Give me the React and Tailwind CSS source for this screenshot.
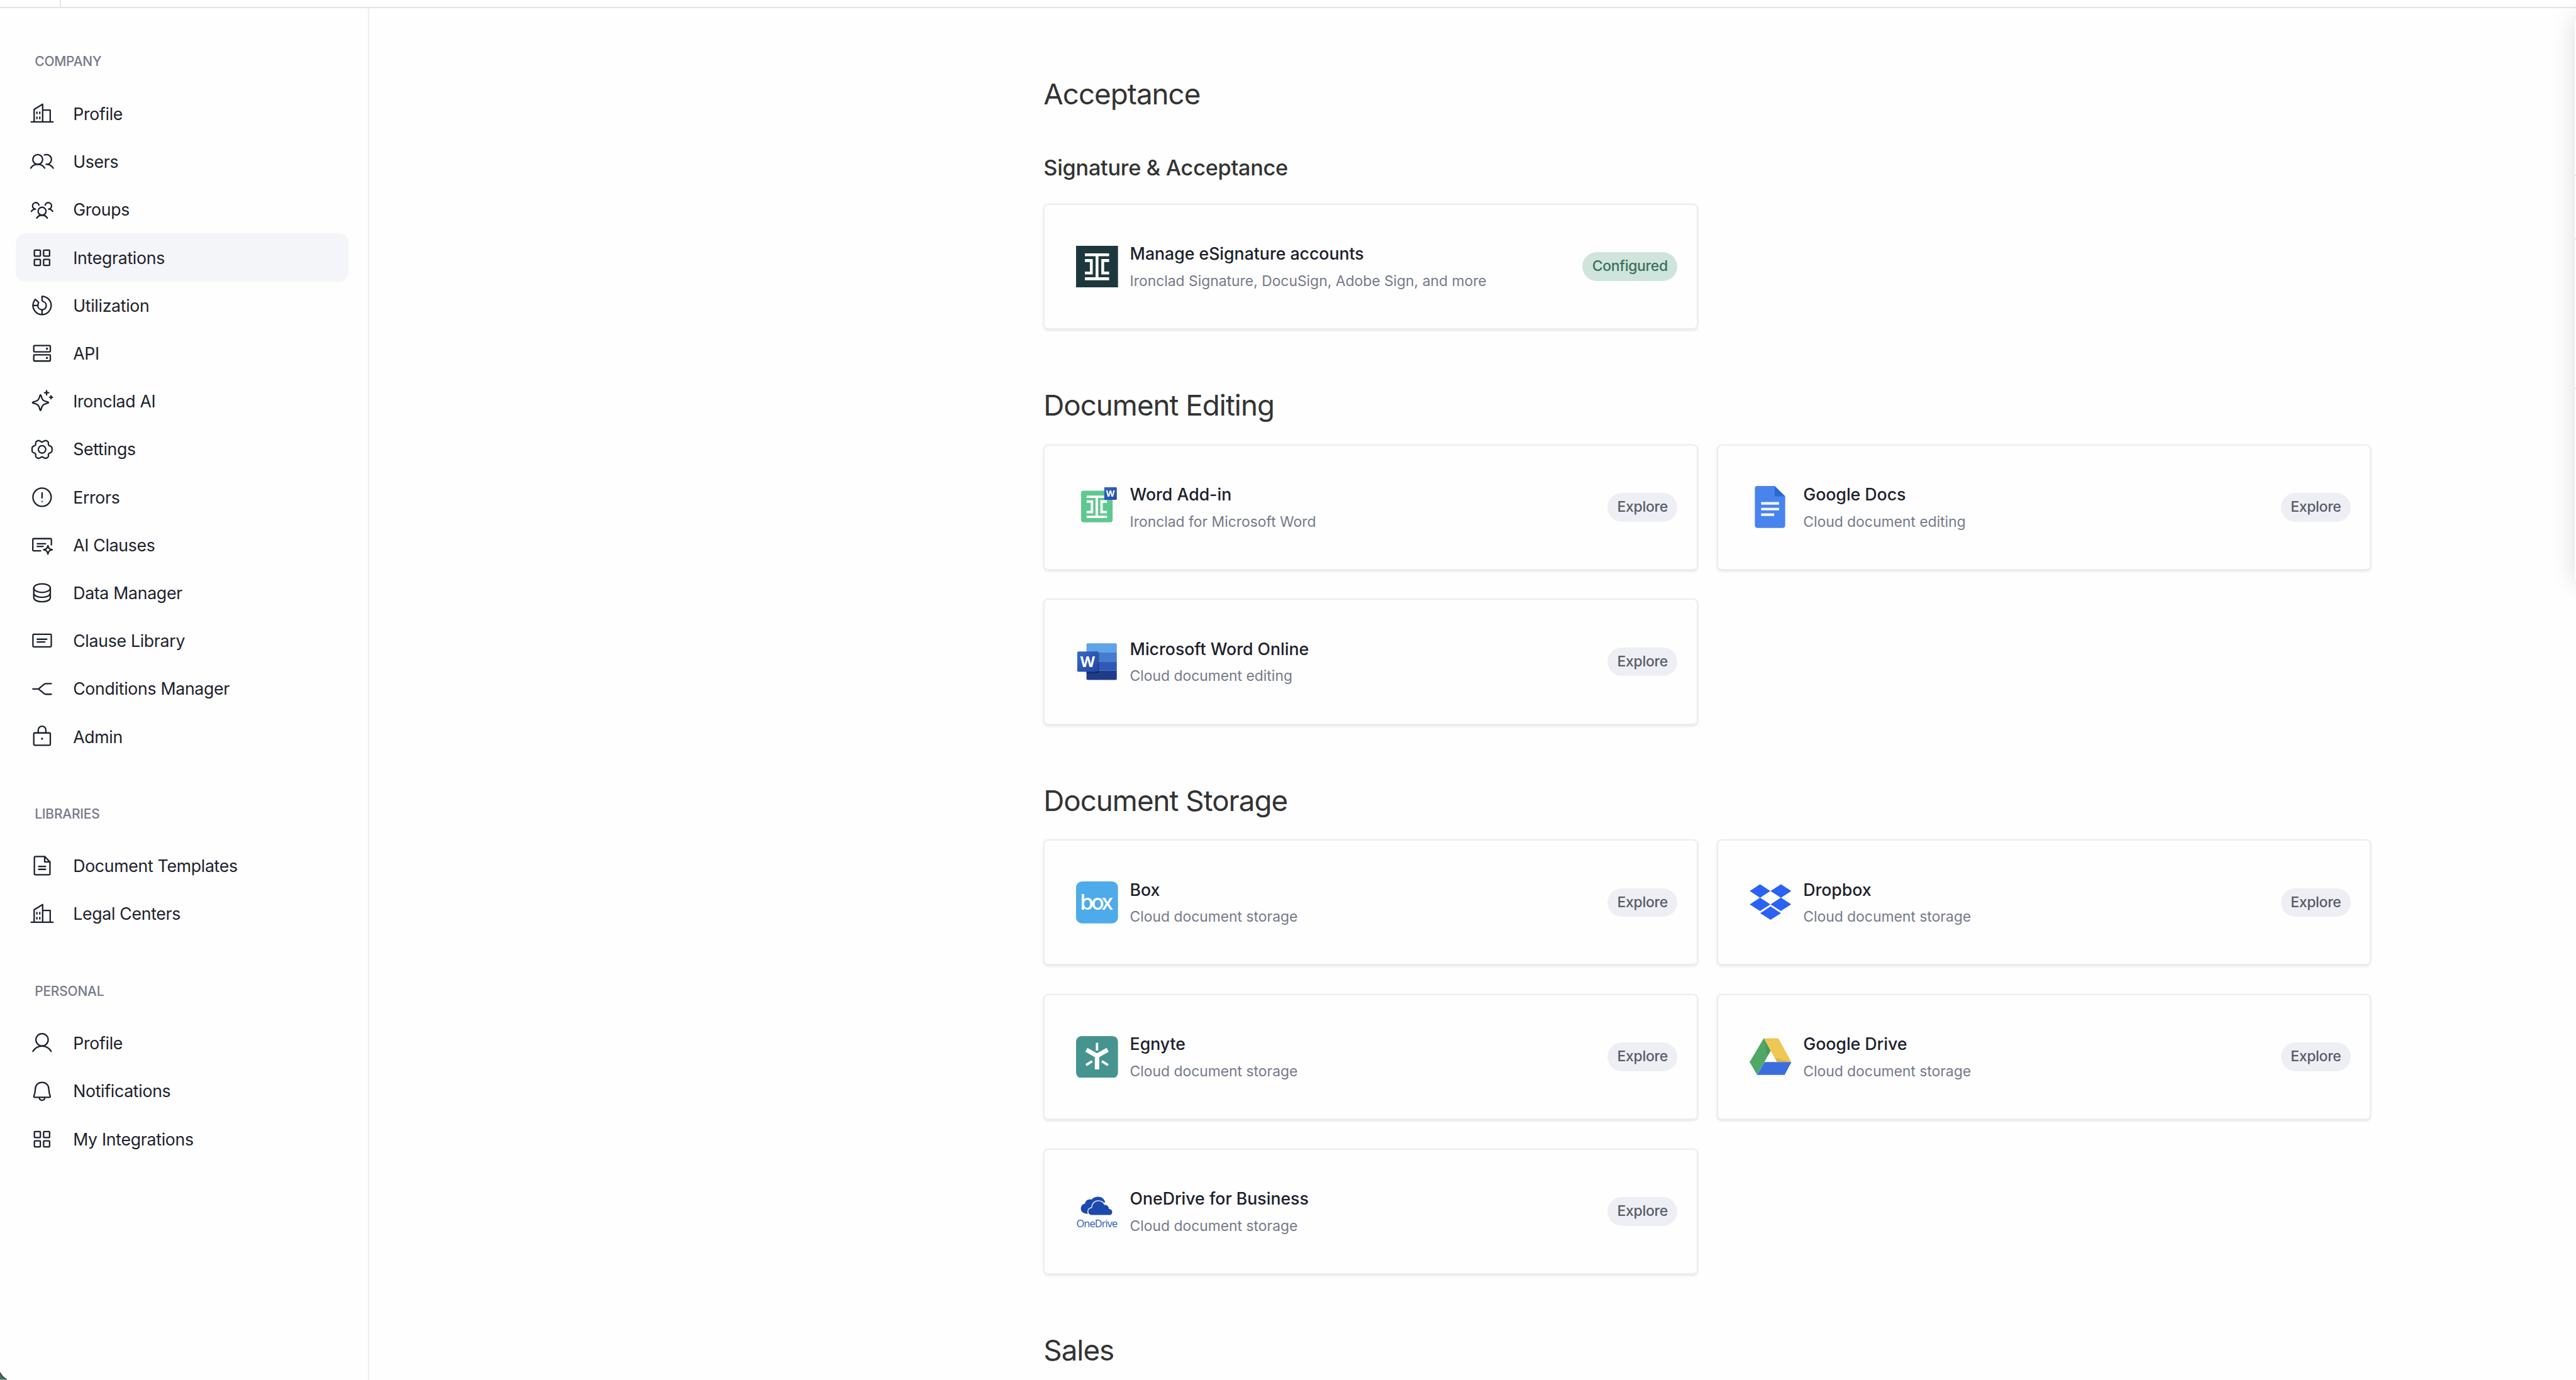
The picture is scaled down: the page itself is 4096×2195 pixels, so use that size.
const icons = {
  building: (
    <>
      <path d="M2.9 18.8h18.3M5.4 18.8V8.4l7.1-4.3v14.7M12.5 9h6.3v9.8" />
      <path d="M7.7 10.7v1.2M10.1 10.7v1.2M7.7 14.9v1.2M10.1 14.9v1.2" />
    </>
  ),
  users: (
    <>
      <circle cx="8.4" cy="10.3" r="4.1" />
      <path d="M2.6 17.5c1.3-2 3.4-3.1 5.8-3.1s4.5 1.1 5.8 3.1" />
      <path d="M14 6.6a4.1 4.1 0 1 1 1.4 7.8c2.4 0 4.6 1.1 5.9 3.1" />
    </>
  ),
  groups: (
    <>
      <circle cx="12" cy="13.1" r="3.3" />
      <path d="M7.6 18.8c.9-1.5 2.6-2.4 4.4-2.4s3.5.9 4.4 2.4" />
      <path d="M9.4 8a2.7 2.7 0 1 0-2.9 3.3c-1.5 0-2.6.7-3.4 1.9M14.6 8a2.7 2.7 0 1 1 2.9 3.3c1.5 0 2.6.7 3.4 1.9" />
    </>
  ),
  grid: (
    <>
      <rect x="5.6" y="5.7" width="5" height="5" rx=".6" />
      <rect x="13.3" y="5.7" width="5" height="5" rx=".6" />
      <rect x="5.6" y="13.4" width="5" height="5" rx=".6" />
      <rect x="13.3" y="13.4" width="5" height="5" rx=".6" />
    </>
  ),
  usage: (
    <>
      <path d="M12 4.4a7.6 7.6 0 1 1-7.6 7.6c0-1.7.6-3.3 1.5-4.6.3-.4.7-.4 1-.1l2 1.9c.3.3.3.6.1.9-.3.5-.5 1.2-.5 1.9a3.5 3.5 0 1 0 4.7-3.2c-.8-.3-1.2-.5-1.2-1.2z" />
      <path d="M4.4 12h4.1M12 15.5v4.1" />
    </>
  ),
  server: (
    <>
      <rect x="5.1" y="5.6" width="13.8" height="5.2" rx=".6" />
      <rect x="5.1" y="13.3" width="13.8" height="5.2" rx=".6" />
      <path d="M16.1 8.1v.2M16.1 15.8v.2" strokeWidth="1.7" />
    </>
  ),
  sparkle: (
    <>
      <path d="M10.7 6.9c.3 0 .4.3.5.7.9 3.5 1.6 4.3 5.2 5.1.6.2 1 .3 1 .6s-.4.5-1 .6c-3.6.9-4.3 1.6-5.2 5.2-.1.5-.2.8-.5.8s-.4-.3-.5-.8c-.9-3.6-1.6-4.3-5.2-5.2-.6-.1-1-.3-1-.6s.4-.4 1-.6c3.6-.8 4.3-1.6 5.2-5.1.1-.4.2-.7.5-.7z" />
      <path d="M15.8 3.4v3.5M14.1 5.1h3.5M19.5 7.7v2.4M18.3 8.9h2.4" />
    </>
  ),
  gear: (
    <>
      <path d="M12 5.9L14 4.8Q14.9 4.3 15.8 4.8L16.6 5.2Q17.3 5.6 17.3 6.5V7.8Q17.3 8.5 17.9 8.8L19.4 9.4Q20.3 9.9 20.3 10.8V13.2Q20.3 14.1 19.4 14.6L17.9 15.2Q17.3 15.5 17.3 16.2V17.5Q17.3 18.4 16.6 18.8L15.8 19.2Q14.9 19.7 14 19.2L12 18.1 10 19.2Q9.100 19.7 8.2 19.2L7.4 18.8Q6.7 18.4 6.7 17.5V16.2Q6.7 15.5 6.1 15.2L4.6 14.6Q3.7 14.1 3.7 13.2V10.8Q3.7 9.9 4.6 9.4L6.1 8.8Q6.7 8.5 6.7 7.8V6.5Q6.7 5.6 7.4 5.2L8.2 4.8Q9.1 4.3 10 4.8z" />
      <circle cx="12" cy="12" r="3.1" />
    </>
  ),
  alert: (
    <>
      <circle cx="12" cy="12" r="7.6" />
      <path d="M12 8.3v4.3M12 15.5v.1" />
    </>
  ),
  aiClause: (
    <>
      <path d="M10.8 16.9H5a.7.7 0 0 1-.7-.7V7.4a.7.7 0 0 1 .7-.7h14.1a.7.7 0 0 1 .7.7v4.5M8 11h6.9M8 13.2h4.9" />
      <path d="M16.9 12.5c.6 2.4 1 2.9 3.6 3.5-2.6.6-3 1.1-3.6 3.6-.6-2.5-1-3-3.6-3.6 2.6-.6 3-1.1 3.6-3.5z" />
    </>
  ),
  database: (
    <>
      <ellipse cx="12" cy="8.1" rx="6.9" ry="3.6" />
      <path d="M5.1 8.1v8.1c0 1.9 3.1 3.3 6.9 3.3s6.9-1.4 6.9-3.3V8.1M5.1 12.3c0 2 3.1 3.5 6.9 3.5s6.9-1.5 6.9-3.5" />
    </>
  ),
  clause: (
    <>
      <rect x="4.4" y="6.8" width="15.3" height="10.5" rx=".7" />
      <path d="M8 10.9h7.9M8 13.2h6.3" />
    </>
  ),
  branch: <path d="M4.3 12H9l4.7-3.9c.5-.4 1-.6 1.6-.6h4.4M9 12l4.7 3.8c.5.4 1 .6 1.6.6h4.4" />,
  lock: (
    <>
      <rect x="5.1" y="8.8" width="13.8" height="10.3" rx=".7" />
      <path d="M8.8 8.8V6.4a3.2 3.2 0 0 1 6.4 0v2.4" />
      <path d="M12 13.6v.1" strokeWidth="1.7" />
    </>
  ),
  document: (
    <>
      <path d="M6.3 4.4h7.9l4.4 4.5v10a.7.7 0 0 1-.7.7H6.3a.7.7 0 0 1-.7-.7V5.1a.7.7 0 0 1 .7-.7z" />
      <path d="M14.2 4.6v4.3h4.3M9.2 12.7h5.7M9.2 15.1h5.7" />
    </>
  ),
  person: (
    <>
      <circle cx="12" cy="9.4" r="5.1" />
      <path d="M4.4 19c1.7-2.8 4.4-4.4 7.6-4.4s5.9 1.6 7.6 4.4" />
    </>
  ),
  bell: (
    <>
      <path d="M12 4.5c-3.3 0-5.5 2.3-5.6 5.4-.1 2.5-.4 4-1.2 6.1-.2.6.1 1 .7 1h12.2c.6 0 .9-.4.7-1-.8-2.1-1.1-3.6-1.2-6.1-.1-3.1-2.3-5.4-5.6-5.4z" />
      <path d="M9.7 17.2c.1 1.4 1 2.3 2.3 2.3s2.2-.9 2.3-2.3" />
    </>
  ),
};

function NavIcon({ name }) {
  return (
    <svg
      className="size-6 shrink-0"
      viewBox="0 0 24 24"
      fill="none"
      stroke="currentColor"
      strokeWidth="1.2"
      strokeLinecap="round"
      strokeLinejoin="round"
    >
      {icons[name]}
    </svg>
  );
}

function IroncladMark({ transform }) {
  return (
    <path
      transform={transform}
      fill="#fff"
      d="M-8.5-9.4h17v2h-7.5v14.8h7.5v2h-17v-2h7.5v-14.8h-7.5zM-8.5-5.4h5.5v10.8h-5.5v-2h3.5v-6.8h-3.5zM8.5-5.4h-5.5v10.8h5.5v-2h-3.5v-6.8h3.5z"
    />
  );
}

const logos = {
  ironclad: (
    <>
      <rect width="35" height="35" fill="#1d383d" />
      <IroncladMark transform="translate(17.5 17.5) scale(1.19)" />
    </>
  ),
  wordAddin: (
    <>
      <defs>
        <linearGradient id="addinBlue" x1="0" y1="0" x2="1" y2="1">
          <stop stopColor="#3668c2" />
          <stop offset="1" stopColor="#2347ab" />
        </linearGradient>
      </defs>
      <rect x="4.2" y="4" width="26.3" height="26.3" rx="2" fill="#5ec88f" />
      <IroncladMark transform="translate(17.3 17.4)" />
      <rect x="23.5" y="1" width="10.5" height="10.5" rx=".7" fill="url(#addinBlue)" />
      <text x="28.7" y="8.9" textAnchor="middle" fontSize="7.4" fontWeight="700" fontFamily="Open Sans, sans-serif" fill="#fff">W</text>
    </>
  ),
  googleDocs: (
    <>
      <path d="M6.4 0h14.5l8.8 8.7v24.3a2 2 0 0 1-2 2H6.4a2 2 0 0 1-2-2V2a2 2 0 0 1 2-2z" fill="#4983ee" />
      <path d="M20.9 0l8.8 8.7h-8.8z" fill="#2f67d0" />
      <path d="M9.6 13.4h15v2.2h-15zM9.6 18.2h15v2.2h-15zM9.6 22.9h10.9v2.2H9.6z" fill="#f3f7fe" />
    </>
  ),
  word: (
    <>
      <defs>
        <linearGradient id="wordBlue" x1="0" y1="0" x2="1" y2="1">
          <stop stopColor="#376ac4" />
          <stop offset="1" stopColor="#2145a8" />
        </linearGradient>
      </defs>
      <path d="M9.7 2.2H33a1 1 0 0 1 1 1V10H8.7V3.2a1 1 0 0 1 1-1z" fill="#5fa3e8" />
      <path d="M8.7 10H34v7.5H8.7z" fill="#447ccf" />
      <path d="M8.7 17.5H34V25H8.7z" fill="#2d59b7" />
      <path d="M8.7 25H34v6.8a1 1 0 0 1-1 1H9.7a1 1 0 0 1-1-1z" fill="#1f3c88" />
      <path d="M8.7 9h9.4a1 1 0 0 1 1 1v16.2a1 1 0 0 1-1 1H8.7z" fill="#000" opacity=".3" />
      <rect x="1" y="9" width="17.3" height="17" rx="1" fill="url(#wordBlue)" />
      <text x="9.6" y="22" textAnchor="middle" fontSize="12.6" fontWeight="700" fontFamily="Open Sans, sans-serif" fill="#fff">W</text>
    </>
  ),
  box: (
    <>
      <rect width="35" height="35" rx="5" fill="#4eabe9" />
      <text x="3.4" y="23.6" textLength="27.8" fontSize="18" fontWeight="500" fontFamily="Inter, sans-serif" fill="#fff">box</text>
    </>
  ),
  dropbox: (
    <path
      fill="#2a62f5"
      d="M8.7 2.4l8.6 5.6-8.6 5.6L.1 8zM26.1 2.4L34.8 8l-8.7 5.6L17.5 8zM8.7 13.5l8.6 5.6-8.6 5.6-8.6-5.6zM26.1 13.5l8.7 5.6-8.7 5.6-8.6-5.6zM17.5 20.9l8.7 5.6-8.7 5.5-8.7-5.5z"
    />
  ),
  egnyte: (
    <>
      <rect width="35" height="35" rx="4.5" fill="#459490" />
      <g stroke="#fff" fill="none">
        <path d="M8.6 11.4l8.9 5.1 8.9-5.1M17.5 16v11.8" strokeWidth="3.7" />
        <path d="M17.5 5.7v6.4M8.3 24.2l5.2-3.3M26.7 24.2l-5.2-3.3" strokeWidth="2" />
      </g>
    </>
  ),
  googleDrive: (
    <>
      <path d="M11.8 1.8H24l10.9 19.9H22.8z" fill="#efc755" />
      <path d="M21.3 18.1l13.6 3.6H22.8z" fill="#dab650" />
      <path d="M11.8 1.8l5.7 10.6L6.3 32.4 0 21.7z" fill="#4fa866" />
      <path d="M11.8 1.8l5.7 10.6-2.7 4.2z" fill="#479a5e" />
      <path d="M12.4 21.7h22.5l-5.7 10.7H6.3z" fill="#3b6ddf" />
    </>
  ),
  oneDrive: (
    <>
      <path d="M9.8 19.2C6.3 19.2 4 17.4 4 14.9c0-2.2 1.5-3.9 3.5-4.1.2-2.3 2-3.6 4-3.6.5 0 1 .1 1.4.2C14.2 5.8 16.1 5 18.3 5c3 0 5.2 1.7 6 4.5z" fill="#1d49ae" />
      <path
        d="M13.2 20.6c-2 0-3.4-1.4-3.4-3.2 0-1.9 1.4-3.3 3.2-3.3.1-3.2 2.3-5.8 5.6-5.8 2.3 0 4.3 1.2 5.2 3.2 2.1-.2 3.8 1.2 4 3.4 1.5.2 2.7 1.3 2.7 2.9 0 1.7-1.2 2.8-2.8 2.8z"
        fill="#1d49ae"
        stroke="#fff"
        strokeWidth=".7"
      />
      <text x=".2" y="30.2" textLength="34.6" fontSize="8.6" fontFamily="Open Sans, sans-serif" fill="#2f59b8">OneDrive</text>
    </>
  ),
};

const nav = [
  {
    title: 'Company',
    items: [
      { label: 'Profile', icon: 'building' },
      { label: 'Users', icon: 'users' },
      { label: 'Groups', icon: 'groups' },
      { label: 'Integrations', icon: 'grid', active: true },
      { label: 'Utilization', icon: 'usage' },
      { label: 'API', icon: 'server' },
      { label: 'Ironclad AI', icon: 'sparkle' },
      { label: 'Settings', icon: 'gear' },
      { label: 'Errors', icon: 'alert' },
      { label: 'AI Clauses', icon: 'aiClause' },
      { label: 'Data Manager', icon: 'database' },
      { label: 'Clause Library', icon: 'clause' },
      { label: 'Conditions Manager', icon: 'branch' },
      { label: 'Admin', icon: 'lock' },
    ],
  },
  {
    title: 'Libraries',
    items: [
      { label: 'Document Templates', icon: 'document' },
      { label: 'Legal Centers', icon: 'building' },
    ],
  },
  {
    title: 'Personal',
    items: [
      { label: 'Profile', icon: 'person' },
      { label: 'Notifications', icon: 'bell' },
      { label: 'My Integrations', icon: 'grid' },
    ],
  },
];

const sections = [
  {
    title: 'Acceptance',
    subtitle: 'Signature & Acceptance',
    items: [
      { name: 'Manage eSignature accounts', desc: 'Ironclad Signature, DocuSign, Adobe Sign, and more', logo: 'ironclad', configured: true },
    ],
  },
  {
    title: 'Document Editing',
    items: [
      { name: 'Word Add-in', desc: 'Ironclad for Microsoft Word', logo: 'wordAddin' },
      { name: 'Google Docs', desc: 'Cloud document editing', logo: 'googleDocs' },
      { name: 'Microsoft Word Online', desc: 'Cloud document editing', logo: 'word' },
    ],
  },
  {
    title: 'Document Storage',
    items: [
      { name: 'Box', desc: 'Cloud document storage', logo: 'box' },
      { name: 'Dropbox', desc: 'Cloud document storage', logo: 'dropbox' },
      { name: 'Egnyte', desc: 'Cloud document storage', logo: 'egnyte' },
      { name: 'Google Drive', desc: 'Cloud document storage', logo: 'googleDrive' },
      { name: 'OneDrive for Business', desc: 'Cloud document storage', logo: 'oneDrive' },
    ],
  },
  { title: 'Sales', items: [] },
];

function Sidebar() {
  return (
    <aside className="w-[308px] shrink-0 border-r-[1.1px] border-[#ecedf3] pl-[13px] pr-4">
      {nav.map(({ title, items }) => (
        <nav key={title} className="pt-8">
          <h2 className="mb-3 h-6 pl-4 text-[11px] leading-[25px] font-medium tracking-[-0.01em] text-[#757a8a] uppercase">
            {title}
          </h2>
          {items.map(({ label, icon, active }) => (
            <a
              key={label}
              className={`flex h-10 items-center gap-[14px] rounded-lg px-2.5 text-sm tracking-[-0.011em] text-[#1c212b] ${
                active ? 'bg-[#f4f5f8]' : ''
              }`}
            >
              <NavIcon name={icon} />
              <span>{label}</span>
            </a>
          ))}
        </nav>
      ))}
    </aside>
  );
}

function IntegrationCard({ name, desc, logo, configured }) {
  return (
    <div className="flex h-[105px] items-center rounded border-[1.1px] border-[#ecedf3] pr-4 pl-[26px] shadow-[0_1px_2px_rgba(0,0,0,0.1)]">
      <svg className="size-[35px] shrink-0" viewBox="0 0 35 35">
        {logos[logo]}
      </svg>
      <div className="ml-2.5 flex-1">
        <div className="text-sm leading-6 font-medium text-[#1c212b]">{name}</div>
        <div className="text-xs leading-[21px] text-[#757a8a]">{desc}</div>
      </div>
      <span
        className={`h-6 rounded-full px-2 text-xs leading-6 font-medium tracking-[-0.011em] ${
          configured ? 'bg-[#cfe4dc] text-[#3b6f5a]' : 'bg-[#eeeff4] text-[#575b68]'
        }`}
      >
        {configured ? 'Configured' : 'Explore'}
      </span>
    </div>
  );
}

export default function App() {
  return (
    <div className="relative flex h-[1152px] w-[2150px] flex-col overflow-hidden bg-[#fefefe] font-['Inter',sans-serif] [zoom:1.9051]">
      <header className="h-[7px] shrink-0 border-b-[1.1px] border-[#e4e4e7]">
        <div className="h-full w-[51px] border-r-[1.1px] border-[#e4e4e7]" />
      </header>

      <div className="flex min-h-0 flex-1">
        <Sidebar />
        <main className="w-[1671px] pt-2 pl-[563px]">
          {sections.map(({ title, subtitle, items }) => (
            <section key={title} className="pt-12">
              <h1 className="text-2xl leading-8 tracking-[-0.022em] text-[#333333]">{title}</h1>
              {subtitle && (
                <h2 className="mt-[33px] text-lg leading-6 font-medium tracking-[-0.008em] text-[#333333]">{subtitle}</h2>
              )}
              <div className={`grid grid-cols-2 gap-x-4 gap-y-6 ${subtitle ? 'mt-[18px]' : 'mt-4'}`}>
                {items.map((item) => (
                  <IntegrationCard key={item.name} {...item} />
                ))}
              </div>
            </section>
          ))}
        </main>
      </div>

      {/* Off-canvas panel, only its edge and shadow peek in */}
      <div className="absolute top-[15px] left-[2149px] h-[471px] w-80 rounded-sm bg-white shadow-[0_0_20px_rgba(0,0,0,0.14)]">
        <div className="h-[132px] border-b-[1.1px] border-[#e4e4e7]" />
        <div className="h-[53px] border-b-[1.1px] border-[#e4e4e7]" />
        <div className="h-[125px] border-b-[1.1px] border-[#e4e4e7]" />
      </div>

      {/* Desktop showing behind the rounded window corner */}
      <svg className="absolute bottom-0 left-0 h-1.5 w-1.5" viewBox="0 0 6 6">
        <path d="M0 0Q2 4 6 6H0z" fill="#4a6d63" />
        <path d="M0 0Q2 4 6 6" fill="none" stroke="#1d2b2a" strokeWidth=".6" />
      </svg>
    </div>
  );
}
